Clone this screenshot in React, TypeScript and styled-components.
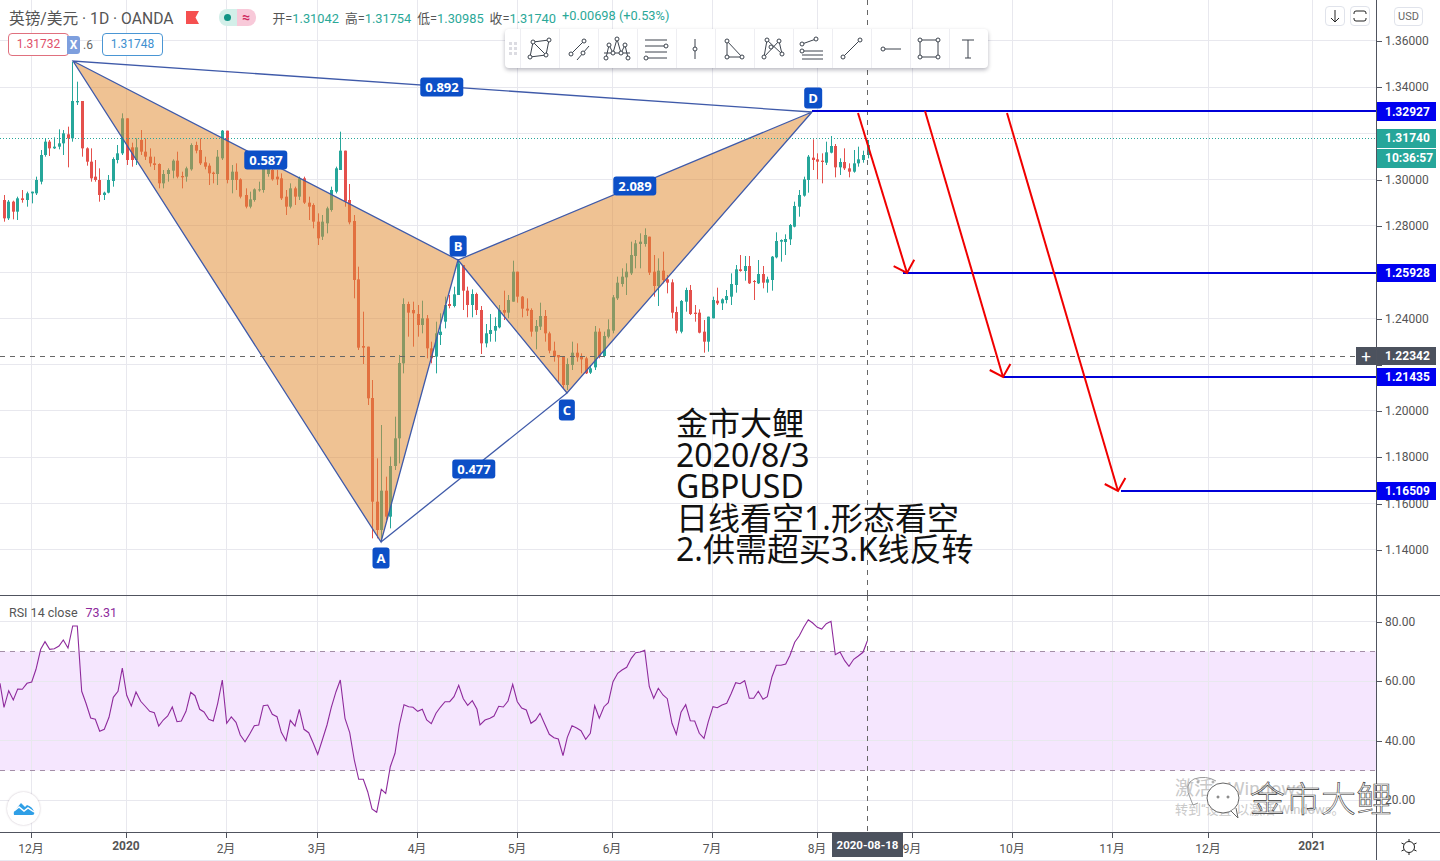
import styled, { createGlobalStyle } from 'styled-components';

const GlobalStyle = createGlobalStyle`
	html, body {
		margin: 0;
		background: #fff;
	}
	* {
		box-sizing: border-box;
	}
`

const FONT = `Roboto, "Noto Sans CJK SC", sans-serif`;
const LINE = '#50535e';
const GRID = '#e8e8ee';
const PATTERN = '#3f5aa9';
const BLUE = '#0c4fc7';

const Page = styled.div`
	position: relative;
	width: 1440px;
	height: 861px;
	overflow: hidden;
	background: #fff;
	font-family: ${FONT};
	color: #555;
`

const PaneRow = styled.div<{ $height: number; $line?: boolean }>`
	display: flex;
	height: ${p => p.$height}px;
	border-top: ${p => (p.$line ? `1px solid ${LINE}` : 'none')};
`

const Pane = styled.div`
	position: relative;
	width: 1376px;
	flex: none;
`

const Chart = styled.svg`
	display: block;
	width: 100%;
	height: 100%;
`

const Scale = styled.div`
	position: relative;
	flex: 1;
	border-left: 1px solid ${LINE};
`

const TickList = styled.div<{ $top: number; $row: number }>`
	display: flex;
	flex-direction: column;
	margin-top: ${p => p.$top}px;
	> div {
		height: ${p => p.$row}px;
	}
`

const PriceTick = styled.div`
	position: relative;
	display: flex;
	align-items: center;
	padding-left: 8px;
	font-size: 12px;
	color: #555;
	&::before {
		content: '';
		position: absolute;
		left: 0;
		top: 50%;
		width: 5px;
		height: 1px;
		background: ${LINE};
	}
`

const PriceTag = styled.div<{ $top: number; $height: number; $bg: string }>`
	position: absolute;
	left: 0;
	top: ${p => p.$top}px;
	width: 59px;
	height: ${p => p.$height}px;
	display: flex;
	align-items: center;
	padding-left: 8px;
	background: ${p => p.$bg};
	color: #fff;
	font-size: 12px;
	font-weight: 700;
`

const PlusButton = styled.div`
	position: absolute;
	right: 0;
	top: 347px;
	width: 20px;
	height: 18px;
	background: #4c525e;
	color: #fff;
	font-size: 17px;
	line-height: 18px;
	text-align: center;
`

const UnitButton = styled.div`
	position: absolute;
	left: 17px;
	top: 7px;
	width: 29px;
	height: 19px;
	border: 1px solid #e0e3eb;
	border-radius: 4px;
	font-size: 11px;
	line-height: 17px;
	text-align: center;
	color: #666;
`

const CornerButtons = styled.div`
	position: absolute;
	right: 6px;
	top: 6px;
	display: flex;
	gap: 5px;
`

const CornerButton = styled.div`
	width: 20px;
	height: 20px;
	display: flex;
	align-items: center;
	justify-content: center;
	border: 1px solid #e0e3eb;
	border-radius: 4px;
	background: #fff;
`

const Legend = styled.div`
	position: absolute;
	left: 9px;
	top: 8px;
	display: flex;
	align-items: center;
	height: 18px;
	white-space: nowrap;
`

const Symbol = styled.span`
	font-size: 15.7px;
	color: #555;
`

const Flag = styled.svg`
	margin-left: 12px;
`

const Pill = styled.div`
	display: flex;
	margin-left: 20px;
	height: 17px;
	border-radius: 8px;
	overflow: hidden;
`

const PillPart = styled.div<{ $bg: string; $color: string }>`
	width: 18.5px;
	display: flex;
	align-items: center;
	justify-content: center;
	background: ${p => p.$bg};
	color: ${p => p.$color};
	font-size: 14px;
	font-weight: 700;
`

const Dot = styled.i`
	width: 7px;
	height: 7px;
	border-radius: 50%;
	background: #109485;
`

const Ohlc = styled.div`
	display: flex;
	gap: 6px;
	margin-left: 17px;
	font-size: 12.8px;
	color: #555;
	b {
		font-weight: 400;
		color: #2ba898;
	}
`

const QuoteRow = styled.div`
	position: absolute;
	left: 8px;
	top: 33px;
	display: flex;
	align-items: center;
	font-size: 12px;
`

const QuoteBox = styled.div<{ $color: string; $border: string }>`
	width: 61px;
	height: 23px;
	border: 1px solid ${p => p.$border};
	border-radius: 4px;
	background: #fff;
	color: ${p => p.$color};
	line-height: 21px;
	text-align: center;
`

const XBadge = styled.div`
	width: 13px;
	height: 18px;
	margin-left: -2px;
	border-radius: 0 3px 3px 0;
	background: #7e9fde;
	color: #fff;
	font-weight: 700;
	line-height: 18px;
	text-align: center;
`

const LeftOver = styled.span`
	width: 22px;
	padding-left: 3px;
	color: #666;
`

const DrawBar = styled.div`
	position: absolute;
	left: 505px;
	top: 29px;
	display: flex;
	height: 39px;
	border-radius: 4px;
	background: #fff;
	box-shadow: 0 2px 4px rgba(0, 0, 30, 0.28);
`

const Grip = styled.div`
	width: 15px;
	display: grid;
	grid-template-columns: 3px 3px;
	gap: 2px;
	align-content: center;
	justify-content: center;
	i {
		width: 3px;
		height: 3px;
		background: #dcdce2;
	}
`

const DrawButton = styled.div`
	width: 39px;
	display: flex;
	align-items: center;
	justify-content: center;
	padding-right: 2px;
	border-left: 1px solid #eeeef2;
`

const PatternTag = styled.div<{ $x: number; $y: number; $letter?: boolean }>`
	position: absolute;
	left: ${p => p.$x}px;
	top: ${p => p.$y}px;
	transform: translate(-50%, -50%);
	padding: ${p => (p.$letter ? '3px 4px' : '2px 5px')};
	min-width: ${p => (p.$letter ? '16px' : '0')};
	text-align: center;
	border-radius: 3px;
	background: ${BLUE};
	color: #fff;
	font: 700 13px/15px "Open Sans", sans-serif;
`

const Note = styled.div`
	position: absolute;
	left: 676px;
	top: 407px;
	font: 400 32px/31.6px "Noto Sans", "Noto Sans CJK SC", sans-serif;
	color: #111;
	white-space: nowrap;
`

const RsiLegend = styled.div`
	position: absolute;
	left: 9px;
	top: 9px;
	display: flex;
	gap: 8px;
	font-size: 12.5px;
	color: #555;
	b {
		font-weight: 400;
		color: #8e2a9c;
	}
`

const LogoBadge = styled.div`
	position: absolute;
	left: 7px;
	top: 196px;
	width: 33px;
	height: 33px;
	display: flex;
	align-items: center;
	justify-content: center;
	border-radius: 50%;
	background: #fff;
	box-shadow: 0 0 2px rgba(90, 60, 90, 0.35);
`

const TimeRow = styled.div`
	position: relative;
	display: flex;
	width: 1376px;
	flex: none;
`

const TimeTick = styled.div<{ $gap: number; $strong?: boolean }>`
	position: relative;
	flex: none;
	width: 60px;
	margin-left: ${p => p.$gap}px;
	padding-top: 6px;
	text-align: center;
	font-size: 12px;
	font-weight: ${p => (p.$strong ? 700 : 400)};
	color: #555;
	&::before {
		content: '';
		position: absolute;
		left: 30px;
		top: 0;
		width: 1px;
		height: 5px;
		background: ${LINE};
	}
`

const DateTag = styled.div`
	position: absolute;
	left: 832px;
	top: 0;
	width: 71px;
	height: 24px;
	background: #4c525e;
	color: #fff;
	font-size: 11.5px;
	font-weight: 700;
	line-height: 24px;
	text-align: center;
`

const Gear = styled.div`
	flex: 1;
	display: flex;
	align-items: center;
	justify-content: center;
	border-left: 1px solid ${LINE};
`

const BottomEdge = styled.div`
	position: absolute;
	left: 0;
	right: 0;
	bottom: 0;
	height: 1px;
	background: #e9e9f1;
`

const Ghost = styled.div<{ $left: number; $top: number; $size: number; $words?: number }>`
	position: absolute;
	left: ${p => p.$left}px;
	top: ${p => p.$top}px;
	font-size: ${p => p.$size}px;
	word-spacing: ${p => p.$words ?? 0}px;
	color: #c9c9c9;
	white-space: nowrap;
`

const WeChat = styled.svg`
	position: absolute;
	left: 1184px;
	top: 772px;
`

const Stamp = styled.div`
	position: absolute;
	left: 1250px;
	top: 774px;
	font: 300 35px/46px "Noto Sans CJK SC", sans-serif;
	color: #fff;
	letter-spacing: 0.5px;
	-webkit-text-stroke: 0.6px #333;
	white-space: nowrap;
`

// [x, top, bottom, high, low, up] read off the chart, in crop coordinates
type Bar = [number, number, number, number, number, number];

const seg1: Bar[] = [
	[12, 450, 505, 435, 515, 0], [25, 455, 505, 450, 510, 1], [40, 455, 485, 452, 508, 0], [52, 445, 485, 440, 510, 1],
	[67, 445, 450, 420, 458, 0], [82, 430, 450, 425, 470, 1], [95, 425, 430, 425, 460, 1], [109, 390, 430, 380, 435, 1],
	[122, 315, 395, 300, 403, 1], [136, 275, 315, 265, 320, 1], [148, 275, 295, 270, 318, 0], [163, 290, 295, 262, 297, 1],
	[176, 280, 290, 238, 298, 1], [190, 250, 280, 240, 315, 1], [203, 253, 265, 230, 352, 0], [217, 153, 265, 35, 275, 1],
	[231, 153, 157, 95, 165, 1], [245, 153, 295, 153, 320, 0], [260, 295, 335, 292, 347, 0], [272, 335, 385, 295, 395, 0],
	[286, 380, 390, 330, 395, 0], [298, 390, 435, 355, 455, 0], [313, 428, 435, 425, 450, 1], [325, 390, 428, 375, 430, 1],
	[340, 327, 393, 322, 410, 1], [352, 310, 330, 285, 340, 1], [367, 205, 310, 190, 315, 1], [380, 205, 330, 205, 345, 0],
	[395, 292, 330, 278, 350, 0], [409, 292, 330, 265, 345, 1], [422, 270, 305, 240, 315, 0], [436, 305, 320, 265, 330, 0],
	[449, 320, 340, 295, 350, 0], [463, 340, 345, 320, 360, 0], [476, 342, 400, 340, 415, 0], [490, 372, 400, 360, 415, 1],
	[503, 360, 372, 355, 395, 1], [518, 332, 362, 328, 385, 1], [530, 332, 380, 305, 385, 0], [545, 378, 382, 365, 415, 0],
	[557, 355, 380, 350, 395, 1], [572, 285, 358, 280, 362, 1], [587, 285, 302, 275, 310, 0], [600, 300, 340, 265, 345, 0],
	[614, 337, 350, 320, 358, 0], [626, 347, 370, 340, 405, 0], [640, 368, 372, 365, 400, 0], [652, 320, 372, 300, 405, 1],
	[667, 242, 325, 240, 330, 1], [680, 242, 390, 242, 400, 0], [695, 365, 390, 345, 430, 1], [707, 365, 390, 340, 420, 0],
	[721, 388, 440, 385, 445, 0], [737, 435, 470, 415, 475, 0], [749, 448, 470, 425, 475, 1], [763, 418, 450, 415, 455, 1],
	[776, 418, 420, 395, 425, 1], [790, 340, 420, 330, 428, 1], [804, 335, 372, 325, 380, 1], [817, 360, 388, 340, 392, 0],
	[830, 380, 388, 360, 405, 0], [844, 385, 445, 370, 450, 0], [857, 440, 470, 420, 495, 0], [871, 415, 470, 400, 475, 1],
	[885, 415, 440, 410, 465, 0], [898, 385, 440, 380, 450, 1], [912, 385, 458, 380, 462, 0], [926, 458, 470, 440, 510, 0],
	[940, 465, 515, 460, 535, 0],
];

const seg2: Bar[] = [
	[278, 170, 220, 145, 240, 0], [292, 170, 215, 150, 225, 1], [305, 130, 175, 125, 205, 1], [319, 75, 135, 65, 140, 1],
	[332, 10, 80, 5, 85, 1], [345, -43, 15, -100, 15, 1], [359, -43, 110, -43, 125, 0], [373, 105, 172, 57, 178, 0],
	[387, 168, 345, 150, 400, 0], [400, 343, 548, 305, 555, 0], [415, 543, 548, 440, 597, 0], [428, 545, 700, 545, 720, 0],
];

const seg3: Bar[] = [
	[97, -6, 305, -60, 415, 0], [110, 305, 390, 175, 415, 0], [124, 272, 390, 75, 420, 1], [137, 272, 350, 230, 360, 0],
	[151, 198, 350, 170, 385, 1], [164, 115, 198, 50, 210, 1], [178, -111, 115, -135, 190, 1],
];

const seg4: Bar[] = [
	[190, 222, 400, 205, 430, 1], [205, 222, 248, 215, 320, 0], [219, 240, 250, 215, 350, 0], [233, 252, 285, 225, 320, 0],
	[247, 265, 285, 212, 310, 1], [260, 265, 355, 255, 385, 0], [274, 355, 385, 335, 400, 0], [287, 310, 380, 275, 430, 1],
	[301, 305, 315, 250, 345, 1], [315, 225, 275, 200, 295, 1], [328, 222, 228, 195, 235, 0], [341, 193, 228, 170, 232, 1],
	[355, 100, 195, 92, 195, 1], [370, 105, 182, 105, 240, 0], [382, 182, 225, 170, 262, 0], [397, 192, 225, 178, 262, 1],
	[409, 192, 240, 188, 255, 0], [424, 240, 340, 228, 372, 0], [437, 310, 340, 282, 352, 1], [451, 300, 312, 252, 335, 1],
	[464, 288, 302, 262, 335, 1], [478, 240, 292, 225, 295, 1], [491, 240, 248, 182, 270, 0], [505, 210, 248, 195, 265, 1],
	[518, 125, 215, 92, 215, 1], [532, 125, 200, 125, 218, 0], [547, 200, 236, 198, 262, 0], [560, 236, 242, 205, 258, 0],
	[574, 240, 305, 235, 320, 0], [587, 288, 305, 270, 358, 1], [601, 258, 290, 218, 300, 1], [614, 258, 310, 240, 335, 0],
	[628, 310, 362, 305, 370, 0], [641, 362, 380, 335, 395, 0], [655, 375, 382, 375, 455, 0], [668, 380, 465, 378, 475, 0],
	[682, 402, 465, 385, 480, 1], [697, 368, 405, 335, 420, 1], [710, 368, 382, 340, 395, 0], [723, 378, 388, 370, 430, 0],
	[737, 385, 430, 380, 432, 0], [750, 415, 428, 405, 432, 1], [764, 305, 412, 288, 420, 1], [778, 305, 380, 295, 385, 0],
	[791, 318, 378, 305, 382, 1], [805, 298, 320, 268, 325, 1], [818, 202, 302, 195, 310, 1], [832, 158, 205, 140, 210, 1],
	[845, 140, 162, 115, 170, 1], [859, 125, 142, 100, 195, 1], [873, 75, 130, 35, 135, 1], [886, 40, 78, 30, 115, 1],
	[900, 35, 42, 10, 115, 1], [914, 15, 42, -5, 50, 1], [928, 20, 128, 20, 135, 0], [941, 125, 168, 75, 200, 0],
	[955, 122, 168, 85, 228, 1], [968, 122, 150, 65, 160, 0], [982, 148, 158, 135, 190, 0],
];

const seg5: Bar[] = [
	[95, 487, 578, 478, 595, 0], [109, 576, 632, 560, 640, 0], [122, 543, 635, 540, 640, 1], [137, 510, 545, 503, 575, 1],
	[151, 510, 582, 495, 585, 0], [165, 578, 582, 555, 605, 0], [178, 578, 638, 568, 640, 0], [191, 635, 665, 600, 698, 0],
	[205, 590, 665, 590, 695, 1], [218, 540, 595, 530, 595, 1], [232, 542, 550, 503, 555, 0], [245, 538, 550, 535, 570, 1],
	[259, 528, 540, 510, 550, 1], [272, 492, 530, 460, 555, 1], [287, 448, 495, 435, 518, 1], [301, 448, 453, 405, 455, 0],
	[314, 438, 453, 408, 482, 1], [328, 438, 490, 408, 492, 0], [341, 483, 486, 480, 540, 0], [355, 462, 490, 420, 492, 1],
	[368, 462, 488, 438, 505, 0], [382, 478, 488, 470, 518, 1], [395, 410, 480, 408, 512, 1], [409, 363, 412, 337, 415, 1],
	[422, 360, 365, 358, 425, 1], [436, 357, 366, 343, 405, 1], [449, 315, 358, 312, 375, 1], [463, 258, 320, 245, 322, 1],
	[478, 225, 260, 210, 290, 1], [491, 178, 227, 170, 230, 1], [505, 110, 180, 105, 218, 1], [518, 113, 120, 58, 150, 0],
	[532, 118, 125, 100, 178, 0], [545, 122, 126, 100, 190, 0], [559, 97, 128, 65, 135, 1], [572, 78, 98, 48, 100, 1],
	[586, 78, 142, 72, 172, 0], [599, 126, 142, 115, 165, 1], [613, 126, 145, 85, 150, 0], [627, 145, 155, 130, 172, 0],
	[641, 130, 155, 90, 158, 1], [655, 118, 130, 80, 140, 1], [668, 105, 120, 92, 128, 1], [683, 75, 105, 60, 115, 1],
];

const place = (bars: Bar[], ox: number, oy: number): Bar[] =>
	bars.map(([x, t, b, h, l, u]) => [ox + x / 3, oy + t / 3, oy + b / 3, oy + h / 3, oy + l / 3, u] as Bar);

const candles: Bar[] = [
	...place(seg1, 0, 50),
	...place(seg2, 225, 165),
	...place(seg3, 340, 400),
	...place(seg4, 340, 230),
	...place(seg5, 640, 120),
];

const rsiA = [
	0, 280, 12, 352, 26, 302, 40, 330, 53, 297, 67, 298, 81, 280, 95, 276, 108, 238, 122, 178, 135, 155, 149, 178, 163, 176,
	177, 168, 190, 150, 204, 174, 218, 108, 232, 108, 245, 304, 258, 340, 272, 384, 286, 388, 299, 424, 313, 418, 327, 382,
	340, 322, 354, 304, 367, 234, 380, 316, 394, 348, 408, 306, 422, 334, 435, 348, 449, 364, 463, 368, 476, 408, 490, 390,
	503, 378, 517, 351, 531, 395, 544, 393, 558, 364, 572, 307, 585, 317, 599, 358, 612, 366, 626, 388, 640, 393, 653, 340,
	667, 270, 680, 400, 694, 381, 708, 397, 721, 435, 735, 455, 749, 432, 763, 407, 776, 405, 790, 347, 803, 345, 817, 373,
	831, 380, 844, 427, 858, 452, 871, 391, 885, 408, 898, 358, 912, 418, 926, 428, 940, 460, 953, 493, 967, 450, 981, 405,
	994, 352, 1008, 305, 1021, 270, 1035, 385, 1049, 428, 1063, 510, 1076, 568, 1090, 568, 1103, 605, 1116, 657, 1130, 667,
	1144, 598, 1157, 610, 1171, 530, 1185, 490, 1198, 405, 1212, 344, 1226, 350, 1239, 352, 1253, 364, 1267, 358, 1280, 390,
	1294, 401, 1308, 370, 1321, 352, 1335, 335, 1349, 335, 1362, 320, 1376, 286, 1390, 326, 1403, 346, 1417, 332, 1431, 358,
];

const rsiB = [
	0, 405, 15, 390, 30, 385, 42, 378, 56, 349, 70, 351, 84, 333, 98, 283, 112, 335, 125, 354, 139, 360, 153, 400, 167, 390,
	180, 370, 194, 402, 208, 433, 222, 443, 235, 447, 249, 497, 262, 442, 276, 407, 290, 414, 303, 422, 317, 448, 331, 430,
	344, 347, 358, 385, 372, 350, 385, 338, 399, 275, 413, 250, 426, 240, 440, 232, 454, 205, 467, 188, 481, 186, 494, 181,
	508, 290, 521, 325, 535, 295, 549, 315, 562, 326, 576, 400, 589, 433, 603, 367, 617, 344, 631, 392, 644, 393, 658, 430,
	672, 445, 685, 395, 699, 350, 712, 353, 726, 345, 740, 340, 753, 312, 767, 278, 780, 281, 794, 272, 808, 325, 821, 325,
	835, 304, 849, 328, 862, 320, 876, 260, 889, 226, 903, 226, 917, 222, 930, 196, 944, 157, 958, 137, 971, 112, 985, 89,
	998, 99, 1012, 112, 1025, 117, 1039, 101, 1053, 94, 1066, 194, 1080, 186, 1094, 212, 1107, 229, 1121, 208, 1135, 198,
	1149, 187, 1162, 153,
];

const toPoints = (vals: number[], ox: number, oy: number) => {
	const out: string[] = [];
	for (let i = 0; i < vals.length; i += 2) out.push(`${(ox + vals[i] / 3).toFixed(1)},${(oy + vals[i + 1] / 3).toFixed(1)}`);
	return out.join(' ');
};

const rsiPoints = `${toPoints(rsiA, 0, 590)} ${toPoints(rsiB, 480, 590)}`;

const gridX = [31, 126, 226, 317, 417, 517, 612, 712, 817, 912, 1012, 1112, 1208, 1312];
const priceY = [40, 87, 133, 179, 225, 272, 318, 364, 410, 457, 503, 549];
const rsiY = [621, 681, 740, 800];

// the two empty rows sit behind tags and show only their tick
const prices = ['1.36000', '1.34000', '1.32000', '1.30000', '1.28000', '', '1.24000', '', '1.20000', '1.18000', '1.16000', '1.14000'];
const rsiLabels = ['80.00', '60.00', '40.00', '20.00'];

const timeTicks = [
	{ label: '12月', gap: 1 }, { label: '2020', gap: 35, strong: true }, { label: '2月', gap: 40 }, { label: '3月', gap: 31 },
	{ label: '4月', gap: 40 }, { label: '5月', gap: 40 }, { label: '6月', gap: 35 }, { label: '7月', gap: 40 },
	{ label: '8月', gap: 45 }, { label: '9月', gap: 35 }, { label: '10月', gap: 40 }, { label: '11月', gap: 40 },
	{ label: '12月', gap: 36 }, { label: '2021', gap: 44, strong: true },
];

const X = [73, 61], A = [381, 542], B = [458, 260], C = [567, 393], D = [812, 112];

const arrows = [
	[858, 113, 907, 273],
	[925, 111, 1003, 377],
	[1007, 113, 1118, 491],
];

const arrowHead = (x1: number, y1: number, x2: number, y2: number) => {
	const back = Math.atan2(y1 - y2, x1 - x2);
	const tip = (a: number) => `${x2 + 15 * Math.cos(back + a)},${y2 + 15 * Math.sin(back + a)}`;
	return `${tip(0.8)} ${x2},${y2} ${tip(-0.8)}`;
};

const Nodes = ({ at }: { at: number[][] }) => (
	<>
		{at.map(([x, y]) => (
			<circle key={`${x}-${y}`} cx={x} cy={y} r={2} fill="#fff" />
		))}
	</>
);

const DrawIcon = ({ lines, nodes }: { lines: string; nodes: number[][] }) => (
	<svg width="28" height="28" viewBox="0 0 28 28" fill="none" stroke="#3c434d" strokeWidth="1">
		<path d={lines} />
		<Nodes at={nodes} />
	</svg>
);

const drawTools = [
	{ lines: 'M8 7L24 5L21 20L5 22L8 7L21 20', nodes: [[8, 7], [24, 5], [21, 20], [5, 22]] },
	{ lines: 'M20 6L7 19M13 25L25 11', nodes: [[20, 6], [7, 19], [19, 18]] },
	{ lines: 'M3 23L6 10L10 18L14 4L18 18L22 10L25 23M1 18H27', nodes: [[14, 4], [6, 10], [22, 10], [10, 18], [18, 18], [3, 23], [25, 23]] },
	{ lines: 'M3 5H25M3 11H24M3 17H25M4 23H25', nodes: [[24, 11], [4, 23]] },
	{ lines: 'M14 4V24', nodes: [[14, 14]] },
	{ lines: 'M7 6V22H22L7 6', nodes: [[7, 6], [7, 22], [22, 22]] },
	{ lines: 'M5 22L8 5L23 19L20 6L5 22', nodes: [[8, 5], [20, 6], [12, 12], [5, 22], [23, 19]] },
	{ lines: 'M4 9L18 4M4 16H25M4 20H25M4 24H25', nodes: [[4, 9], [18, 4], [4, 16]] },
	{ lines: 'M6 22L23 5', nodes: [[23, 5], [6, 22]] },
	{ lines: 'M7 14H25', nodes: [[7, 14]] },
	{ lines: 'M5 5H23V22H5V5', nodes: [[5, 5], [23, 5], [5, 22], [23, 22]] },
	{ lines: 'M8 5H20M14 5V23M11 23H17', nodes: [] },
];

function MainChart() {
	return (
		<Chart viewBox="0 0 1376 595">
			{priceY.map(y => <line key={y} x1="0" x2="1376" y1={y + 0.5} y2={y + 0.5} stroke={GRID} />)}
			{gridX.map(x => <line key={x} x1={x + 0.5} x2={x + 0.5} y1="0" y2="595" stroke={GRID} />)}
			{candles.map(([x, t, b, h, l, up], i) => {
				const color = up ? '#26a69a' : '#e4504c';
				const cx = Math.round(x);
				return (
					<g key={i} fill={color}>
						<rect x={cx} y={h} width="1" height={Math.max(l - h, 1)} />
						<rect x={cx - 1} y={t} width="3" height={Math.max(b - t, 1)} />
					</g>
				);
			})}
			<polygon points={`${X} ${A} ${B}`} fill="rgb(225,141,53)" fillOpacity="0.535" />
			<polygon points={`${B} ${C} ${D}`} fill="rgb(225,141,53)" fillOpacity="0.535" />
			<polyline points={`${D} ${X} ${A} ${B} ${C} ${D} ${B} ${X}`} fill="none" stroke={PATTERN} strokeWidth="1.3" />
			<line x1={A[0]} y1={A[1]} x2={C[0]} y2={C[1]} stroke={PATTERN} strokeWidth="1.3" />
			<line x1="0" x2="1376" y1="138.5" y2="138.5" stroke="#26a69a" strokeDasharray="1 2" />
			<line x1="0" x2="1376" y1="356.5" y2="356.5" stroke="#666" strokeDasharray="5 5" />
			<line x1="867.5" x2="867.5" y1="0" y2="595" stroke="#666" strokeDasharray="5 5" />
			<g stroke="#0000d8" strokeWidth="2">
				<line x1="812" x2="1376" y1="111" y2="111" />
				<line x1="903" x2="1376" y1="273" y2="273" />
				<line x1="1003" x2="1376" y1="377" y2="377" />
				<line x1="1121" x2="1376" y1="491" y2="491" />
			</g>
			<g stroke="#f00000" strokeWidth="2" fill="none">
				{arrows.map(([x1, y1, x2, y2]) => (
					<g key={x1}>
						<line x1={x1} y1={y1} x2={x2} y2={y2} />
						<polyline points={arrowHead(x1, y1, x2, y2)} />
					</g>
				))}
			</g>
		</Chart>
	);
}

function RsiChart() {
	return (
		<Chart viewBox="0 596 1376 236">
			<rect x="0" y="651.5" width="1376" height="119" fill="#f5e6fe" />
			{rsiY.map(y => <line key={y} x1="0" x2="1376" y1={y + 0.5} y2={y + 0.5} stroke={GRID} />)}
			{gridX.map(x => <line key={x} x1={x + 0.5} x2={x + 0.5} y1="596" y2="832" stroke={GRID} />)}
			<g stroke="#a48fa8" strokeDasharray="5 5">
				<line x1="0" x2="1376" y1="651.5" y2="651.5" />
				<line x1="0" x2="1376" y1="770.5" y2="770.5" />
			</g>
			<polyline points={rsiPoints} fill="none" stroke="#8e2a9c" strokeWidth="1.1" />
			<line x1="867.5" x2="867.5" y1="596" y2="832" stroke="#666" strokeDasharray="5 5" />
		</Chart>
	);
}

function App() {
	return (
		<Page>
			<GlobalStyle />
			<PaneRow $height={595}>
				<Pane>
					<MainChart />
					<Legend>
						<Symbol>英镑/美元 · 1D · OANDA</Symbol>
						<Flag width="13" height="13" viewBox="0 0 13 13">
							<path d="M0 0H13L9.5 6.5L13 13H0Z" fill="#f55050" />
						</Flag>
						<Pill>
							<PillPart $bg="#d3efe9" $color="#109485"><Dot /></PillPart>
							<PillPart $bg="#f8c9d9" $color="#cf2a60">≈</PillPart>
						</Pill>
						<Ohlc>
							<span>开=<b>1.31042</b></span>
							<span>高=<b>1.31754</b></span>
							<span>低=<b>1.30985</b></span>
							<span>收=<b>1.31740</b></span>
							<b>+0.00698 (+0.53%)</b>
						</Ohlc>
					</Legend>
					<QuoteRow>
						<QuoteBox $color="#e0506a" $border="#e0707e">1.31732</QuoteBox>
						<XBadge>X</XBadge>
						<LeftOver>.6</LeftOver>
						<QuoteBox $color="#3d8fd0" $border="#4a96d4">1.31748</QuoteBox>
					</QuoteRow>
					<DrawBar>
						<Grip>
							{Array.from({ length: 6 }, (_, i) => <i key={i} />)}
						</Grip>
						{drawTools.map(tool => (
							<DrawButton key={tool.lines}>
								<DrawIcon lines={tool.lines} nodes={tool.nodes} />
							</DrawButton>
						))}
					</DrawBar>
					<CornerButtons>
						<CornerButton>
							<svg width="14" height="14" viewBox="0 0 14 14" fill="none" stroke="#222" strokeWidth="1">
								<path d="M7 1V13M3 9L7 13L11 9" />
							</svg>
						</CornerButton>
						<CornerButton>
							<svg width="14" height="14" viewBox="0 0 14 14" fill="none" stroke="#222" strokeWidth="1">
								<path d="M1 5V4Q1 2 3 2H11Q13 2 13 4V5M1 9V10Q1 12 3 12H11Q13 12 13 10V9" />
							</svg>
						</CornerButton>
					</CornerButtons>
					<PatternTag $x={442} $y={87}>0.892</PatternTag>
					<PatternTag $x={266} $y={160}>0.587</PatternTag>
					<PatternTag $x={635} $y={186}>2.089</PatternTag>
					<PatternTag $x={474} $y={469}>0.477</PatternTag>
					<PatternTag $letter $x={813} $y={98}>D</PatternTag>
					<PatternTag $letter $x={458} $y={246}>B</PatternTag>
					<PatternTag $letter $x={567} $y={410}>C</PatternTag>
					<PatternTag $letter $x={381} $y={558}>A</PatternTag>
					<Note>
						金市大鲤<br />
						2020/8/3<br />
						GBPUSD<br />
						日线看空1.形态看空<br />
						2.供需超买3.K线反转
					</Note>
					<PlusButton>+</PlusButton>
				</Pane>
				<Scale>
					<TickList $top={18} $row={46.25}>
						{prices.map((p, i) => <PriceTick key={i}>{p}</PriceTick>)}
					</TickList>
					<UnitButton>USD</UnitButton>
					<PriceTag $top={102} $height={19} $bg="#0000f0">1.32927</PriceTag>
					<PriceTag $top={129} $height={18.5} $bg="#26a69a">1.31740</PriceTag>
					<PriceTag $top={148.5} $height={19.5} $bg="#26a69a">10:36:57</PriceTag>
					<PriceTag $top={264} $height={18} $bg="#0000f0">1.25928</PriceTag>
					<PriceTag $top={347} $height={18} $bg="#4c525e">1.22342</PriceTag>
					<PriceTag $top={368} $height={18} $bg="#0000f0">1.21435</PriceTag>
					<PriceTag $top={482} $height={18} $bg="#0000f0">1.16509</PriceTag>
				</Scale>
			</PaneRow>
			<PaneRow $height={237} $line>
				<Pane>
					<RsiChart />
					<RsiLegend>
						<span>RSI 14 close</span>
						<b>73.31</b>
					</RsiLegend>
					<LogoBadge>
						<svg width="22" height="14" viewBox="0 0 22 14">
							<path d="M1 13Q0 9 3 7L8 1L12 5L14 3Q20 5 21 10Q22 13 19 13Z" fill="#2f9fe6" />
							<path d="M1 9L6 5L11 9L15 6L21 10" fill="none" stroke="#fff" strokeWidth="1.5" />
						</svg>
					</LogoBadge>
				</Pane>
				<Scale>
					<TickList $top={-4} $row={59.5}>
						{rsiLabels.map(p => <PriceTick key={p}>{p}</PriceTick>)}
					</TickList>
				</Scale>
			</PaneRow>
			<PaneRow $height={29} $line>
				<TimeRow>
					{timeTicks.map((t, i) => (
						<TimeTick key={i} $gap={t.gap} $strong={t.strong}>{t.label}</TimeTick>
					))}
					<DateTag>2020-08-18</DateTag>
				</TimeRow>
				<Gear>
					<svg width="18" height="18" viewBox="0 0 18 18" fill="none" stroke="#222" strokeWidth="1">
						<circle cx="9" cy="9" r="5.5" />
						<path d="M9 1V3.5M9 14.5V17M1.5 5L4.2 6.3M13.8 11.7L16.5 13M1.5 13L4.2 11.7M13.8 6.3L16.5 5" />
					</svg>
				</Gear>
			</PaneRow>
			<BottomEdge />
			<Ghost $left={1175} $top={773} $size={19} $words={10}>激活 Windows</Ghost>
			<Ghost $left={1175} $top={799} $size={13}>转到“设置”以激活 Windows。</Ghost>
			<WeChat width="70" height="48" viewBox="0 0 70 48" fill="none" stroke="#666" strokeWidth="1">
				<path d="M7 28Q-1 12 10 7Q22 3 32 9" stroke="#999" />
				<path d="M7 28L9 33L14 31" stroke="#999" />
				<circle cx="14" cy="10" r="1" stroke="#999" />
				<circle cx="29" cy="10" r="1" stroke="#999" />
				<ellipse cx="39" cy="26" rx="16" ry="15" fill="#fff" />
				<path d="M47 39L54 46L52 36" fill="#fff" />
				<circle cx="34" cy="25" r="1" />
				<circle cx="44" cy="25" r="1" />
			</WeChat>
			<Stamp>金市大鲤</Stamp>
		</Page>
	);
}

export default App;
